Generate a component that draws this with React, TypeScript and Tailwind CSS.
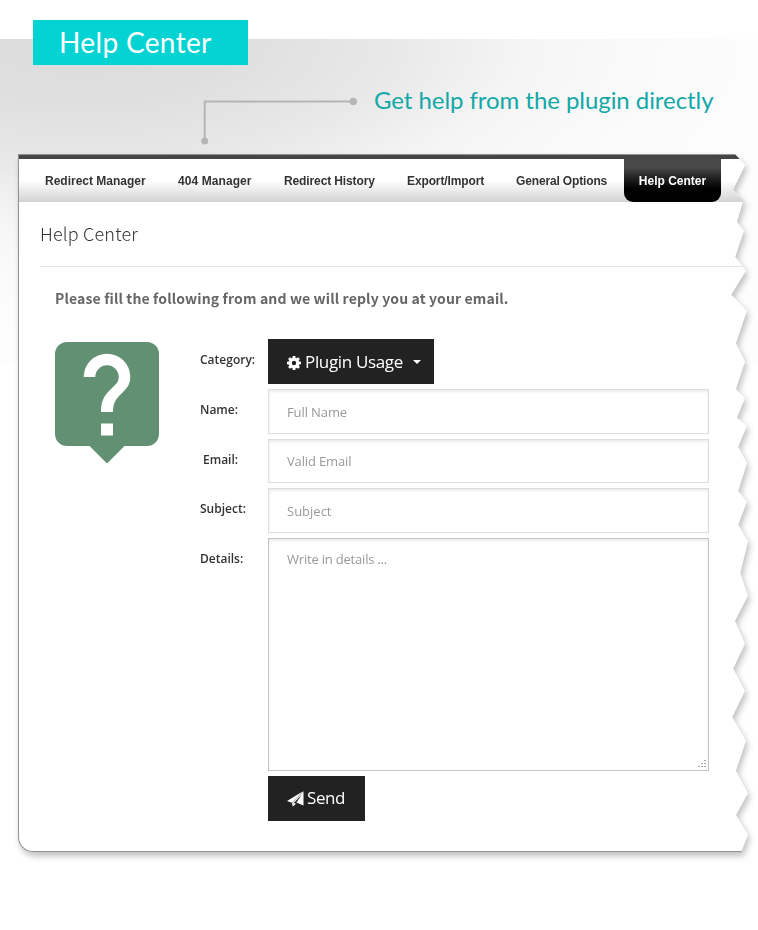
import type { ReactNode } from 'react';

const TABS = [
  { label: 'Redirect Manager', box: 'ml-[26px] w-[133px]' },
  { label: '404 Manager', box: 'w-[106px] tracking-[0.08px]' },
  { label: 'Redirect History', box: 'w-[123px] tracking-[-0.12px]' },
  { label: 'Export/Import', box: 'w-[109px] tracking-[-0.12px]' },
  { label: 'General Options', box: 'w-[108px] tracking-[-0.15px]' },
];

// Outline of the torn sheet, relative to the panel's top left corner.
const TORN_EDGE: [number, number][] = [
  [0, 0], [717, 0], [727, 11], [715, 36], [725.5, 46], [719, 67.7], [726, 76.7], [717.3, 102.7],
  [728, 116.7], [713.3, 140.7], [729, 156.7], [718, 189.3], [727, 207.7], [718, 235],
  [727, 244.3], [719, 263.7], [729, 271.7], [720.3, 292.7], [729, 309.3], [720.3, 337],
  [729, 347.7], [720.3, 370.7], [730, 387.3], [722.3, 419.3], [730, 441.7], [717, 467],
  [727, 489.7], [715.3, 514.7], [727, 537], [714.3, 563], [728, 586.7], [718, 616.7],
  [730, 639.3], [718, 661], [730, 680.7], [723.3, 698], [0, 698],
];
const tornPath = `polygon(${TORN_EDGE.map(([x, y]) => `${x}px ${y}px`).join(',')})`;

function Gear() {
  return (
    <svg viewBox="-7 -7 14 14" className="h-[14px] w-[14px]" fill="#fff">
      <path
        fillRule="evenodd"
        d="M-5.2 0a5.2 5.2 0 1 0 10.4 0a5.2 5.2 0 1 0 -10.4 0M-2.2 0a2.2 2.2 0 1 0 4.4 0a2.2 2.2 0 1 0 -4.4 0"
      />
      {[0, 45, 90, 135, 180, 225, 270, 315].map((a) => (
        <path key={a} d="M-1.7 -4.2L-1.3 -7H1.3L1.7 -4.2Z" transform={`rotate(${a})`} />
      ))}
    </svg>
  );
}

function Send() {
  return (
    <svg viewBox="0 0 17 16" className="h-4 w-[17px]" fill="#fff">
      <path d="M16 0.2L0 10l5 1.7Z" />
      <path d="M16.5 0.2V14.4L9.4 11.6L15 3.4L6.4 12.2L5.6 15.6L5 12Z" />
      <path d="M5.6 15.8L9 12.7L6.6 11.7Z" />
    </svg>
  );
}

function Row({ label, className, children }: { label: string; className?: string; children: ReactNode }) {
  return (
    <div className="flex">
      <label className={`w-[68px] shrink-0 pt-3 text-[12px] leading-[18px] font-semibold text-[#333] ${className ?? ''}`}>
        {label}
      </label>
      {children}
    </div>
  );
}

const field =
  'block w-[441px] border px-[18px] text-[13px] outline-none placeholder:text-[#999] placeholder:opacity-100 bg-white shadow-[inset_0_2px_3px_rgba(0,0,0,0.08)]';

export default function App() {
  return (
    <div className="h-[930px] w-[758px] overflow-hidden bg-white pt-[39px] font-['Open_Sans',sans-serif]">
      <div className="h-[323px] bg-[radial-gradient(ellipse_720px_290px_at_80px_0px,#dcdcdc_0%,#dfdfdf_22%,#e8e8e8_43%,#f5f5f5_62%,#fafafa_78%,#fdfdfd_100%)]">
        <div className="relative -top-[19px] ml-[33px] flex h-[45px] w-[215px] items-center bg-[#04d3d3] pl-[26px]">
          <h1 className="whitespace-nowrap font-[Lato,sans-serif] text-[28px] leading-[45px] tracking-[0.35px] text-white">Help Center</h1>
        </div>
        <div className="-mt-[3px] flex">
          <svg className="ml-[200px] h-[64px] w-[160px]" viewBox="0 0 160 64" fill="none" stroke="#b5b5b5" strokeWidth="2">
            <path d="M4.7 58V20.5H153" />
            <circle cx="4.7" cy="60" r="3.5" fill="#b5b5b5" stroke="none" />
            <circle cx="153.3" cy="20.5" r="3.7" fill="#b5b5b5" stroke="none" />
          </svg>
          <p className="ml-[14px] mt-[4px] whitespace-nowrap font-[Lato,sans-serif] text-[24px] leading-[30px] tracking-[-0.06px] text-[#12a8a8]">
            Get help from the plugin directly
          </p>
        </div>
        <div className="ml-[18px] mt-[9px] h-[698px] w-[732px] drop-shadow-[2px_4px_3px_rgba(0,0,0,0.25)]">
          <main
            className="h-[698px] w-[732px] overflow-hidden rounded-bl-[15px] border-b border-l border-t border-[#929292] bg-white"
            style={{ clipPath: tornPath }}
          >
            <nav className="flex h-[47px] border-t-4 border-[#454545] bg-linear-to-b from-white from-50% to-[#d3d3d3] font-['Liberation_Sans',Arial,sans-serif] text-[12px] leading-[45px] font-bold text-[#333]">
              {TABS.map((t) => (
                <a key={t.label} className={`shrink-0 whitespace-nowrap ${t.box}`}>{t.label}</a>
              ))}
              <a className="h-[43px] w-[97px] rounded-b-[9px] bg-linear-to-b from-[#484848] from-20% to-black to-85% text-center text-white">
                Help Center
              </a>
            </nav>
            <h2 className="ml-[21px] h-[65px] border-b border-[#e5e5e5] pt-[17px] font-['Noto_Sans_CJK_SC',sans-serif] text-[18px] leading-[28px] font-light tracking-[0.18px] text-[#333]">
              Help Center
            </h2>
            <p className="ml-[36px] mt-[20px] whitespace-nowrap font-['Noto_Sans_CJK_SC',sans-serif] text-[14px] leading-[22px] font-bold tracking-[0.14px] text-[#666]">
              Please fill the following from and we will reply you at your email.
            </p>
            <div className="ml-[36px] mt-[30px] flex">
              <svg className="mt-[3px] h-[122px] w-[145px] shrink-0" viewBox="0 0 145 122">
                <path fill="#629072" d="M12 0H92a12 12 0 0 1 12 12V92a12 12 0 0 1-12 12H69.500L52 121.500L34.500 104H12A12 12 0 0 1 0 92V12A12 12 0 0 1 12 0Z" />
                <path
                  fill="#fff"
                  d="M28.700 35A23.300 23.300 0 0 1 75.300 35C75.300 41 73 45 69 49L64 54C60 58.500 58 62 58 70H46C46 60 48.500 55 53 50L60.500 42.500C62.500 40.500 63.700 38 63.700 35A11.700 11.700 0 0 0 40.300 35Z"
                />
                <path fill="#fff" d="M46 81.500H58V93.500H46Z" />
              </svg>
              <form className="flex flex-col gap-[5px]">
                <Row label="Category:">
                  <button type="button" className="flex h-[45px] w-[166px] items-center bg-[#222] pl-[19px] text-[17px] text-white">
                    <span className="mt-[3px]"><Gear /></span>
                    <span className="ml-[4px] whitespace-nowrap tracking-[-0.34px]">Plugin Usage</span>
                    <span className="ml-[10px] border-x-4 border-t-4 border-x-transparent border-t-white" />
                  </button>
                </Row>
                <Row label="Name:">
                  <input className={`${field} h-[45px] border-[#ddd] tracking-[-0.1px]`} placeholder="Full Name" />
                </Row>
                <Row label="Email:" className="pl-[3px]">
                  <input className={`${field} h-[44px] border-[#ddd] tracking-[-0.15px]`} placeholder="Valid Email" />
                </Row>
                <Row label="Subject:">
                  <input className={`${field} h-[45px] border-[#ddd]`} placeholder="Subject" />
                </Row>
                <Row label="Details:">
                  <div className="relative">
                    <textarea className={`${field} h-[233px] resize-none border-[#c4c4c4] pt-[11px] leading-[19px] tracking-[-0.2px]`} placeholder="Write in details ..." />
                    <svg className="absolute bottom-[3px] right-[3px] h-2 w-2" viewBox="0 0 8 8" fill="#aaa">
                      <path d="M6 0h2v1H6zM3 3h2v1H3zM6 3h2v1H6zM0 6h2v1H0zM3 6h2v1H3zM6 6h2v1H6z" />
                    </svg>
                  </div>
                </Row>
                <button type="button" className="ml-[68px] flex h-[45px] w-[97px] items-center bg-[#222] pl-[19px] text-[17px] text-white">
                  <Send />
                  <span className="-mt-px ml-[3px] tracking-[-0.4px]">Send</span>
                </button>
              </form>
            </div>
          </main>
        </div>
      </div>
    </div>
  );
}
